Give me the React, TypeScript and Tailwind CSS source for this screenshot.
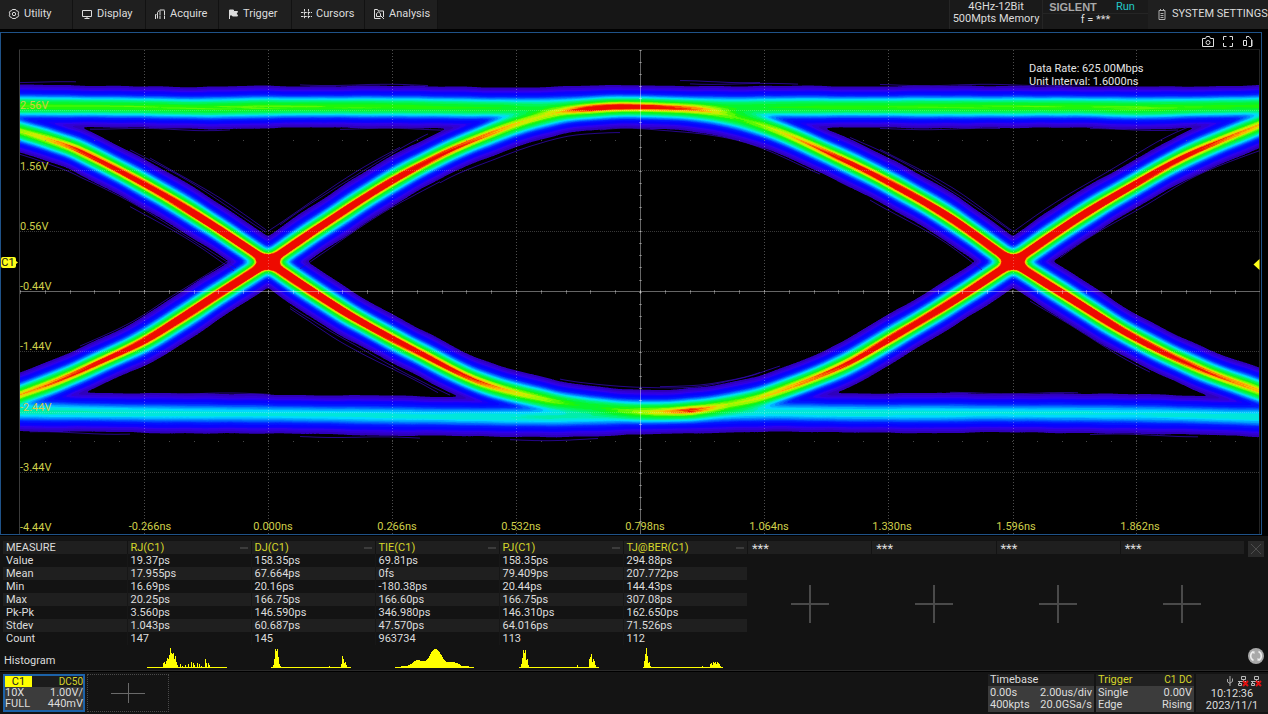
import type { ReactNode } from "react";

type Knot = [x: number, y: number, gain: number];

const LEFT = 20;
const RIGHT = 1260;
const TOP = 70;
const BOTTOM = 450;
const SIGMA = 9;

// Each trace is a list of knots: position on the grid and hit density there.
const traces: Knot[][] = [
  [
    [20, 106, 0.83], [140, 107, 0.83], [200, 108, 0.83], [268, 107, 0.84], [400, 107, 0.82], [500, 108, 0.8],
    [560, 107, 0.7], [640, 106, 0.68], [740, 107, 0.78], [800, 107, 0.81], [880, 107, 0.82], [1000, 107, 0.83],
    [1080, 107, 0.83], [1140, 108, 0.84], [1200, 107, 0.82], [1260, 106, 0.81],
  ],
  [
    [20, 411, 0.64], [144, 413, 0.61], [268, 414, 0.59], [420, 416, 0.6], [550, 417, 0.63], [640, 415, 0.6],
    [760, 412, 0.6], [860, 413, 0.61], [1000, 413, 0.59], [1140, 414, 0.59], [1260, 417, 0.61],
  ],
  [
    [20, 395, 0.92], [60, 380, 0.95], [100, 362, 0.97], [144, 341, 1], [180, 319, 1.02], [220, 293, 1.03],
    [268, 262, 1.04], [320, 227, 1.02], [387, 184, 1], [443, 154, 0.97], [487, 135, 0.94], [520, 123, 0.91],
    [560, 113, 0.87], [590, 109, 0.92], [620, 107, 0.93], [660, 108, 0.9], [700, 111, 0.86], [740, 119, 0.83],
    [780, 132, 0.9], [830, 154, 0.96], [880, 178, 0.99], [947, 216, 1.02], [1013, 262, 1.04], [1065, 295, 1.03],
    [1130, 335, 1], [1200, 369, 0.96], [1260, 391, 0.92],
  ],
  [
    [20, 131, 0.88], [50, 140, 0.92], [80, 151, 0.96], [144, 184, 0.99], [200, 217, 1.02], [268, 262, 1.04],
    [310, 290, 1.03], [353, 317, 1.01], [420, 353, 0.99], [480, 382, 0.95], [548, 400, 0.87], [590, 406, 0.77],
    [640, 411, 0.84], [690, 410, 0.93], [730, 404, 0.87], [765, 396, 0.91], [840, 367, 0.96], [890, 339, 1],
    [950, 303, 1.02], [1013, 262, 1.04], [1080, 217, 1.02], [1137, 183, 1], [1180, 159, 0.98], [1220, 141, 0.95],
    [1260, 125, 0.92],
  ],
];

const colorStops: [number, number, number, number][] = [
  [0.055, 46, 0, 180],
  [0.13, 52, 0, 235],
  [0.2, 8, 0, 255],
  [0.34, 0, 30, 255],
  [0.46, 0, 130, 255],
  [0.56, 0, 225, 255],
  [0.68, 0, 245, 110],
  [0.8, 10, 245, 10],
  [0.87, 150, 250, 0],
  [0.91, 245, 225, 0],
  [0.94, 255, 130, 0],
  [0.965, 238, 10, 0],
];

function colorAt(v: number) {
  let i = 0;
  while (i < colorStops.length - 2 && v > colorStops[i + 1][0]) i++;
  const a = colorStops[i];
  const b = colorStops[i + 1];
  const t = Math.min(1, Math.max(0, (v - a[0]) / (b[0] - a[0])));
  const c = [1, 2, 3].map((k) => Math.round(a[k] + (b[k] - a[k]) * t));
  return `rgb(${c.join(",")})`;
}

function sample(knots: Knot[], x: number) {
  let i = 0;
  while (i < knots.length - 2 && x > knots[i + 1][0]) i++;
  const p1 = knots[i];
  const p2 = knots[i + 1];
  const p0 = knots[i - 1] ?? p1;
  const p3 = knots[i + 2] ?? p2;
  const h = p2[0] - p1[0];
  const t = (x - p1[0]) / h;
  const m1 = ((p2[1] - p0[1]) / (p2[0] - p0[0])) * h;
  const m2 = ((p3[1] - p1[1]) / (p3[0] - p1[0])) * h;
  const t2 = t * t;
  const t3 = t2 * t;
  const y = (2 * t3 - 3 * t2 + 1) * p1[1] + (t3 - 2 * t2 + t) * m1 + (3 * t2 - 2 * t3) * p2[1] + (t3 - t2) * m2;
  const slope = ((6 * t2 - 6 * t) * p1[1] + (3 * t2 - 4 * t + 1) * m1 + (6 * t - 6 * t2) * p2[1] + (3 * t2 - 2 * t) * m2) / h;
  return { y, slope, gain: p1[2] + (p2[2] - p1[2]) * t };
}

const levels = [
  0.055, 0.09, 0.13, 0.17, 0.21, 0.28, 0.34, 0.38, 0.42, 0.46, 0.5, 0.54, 0.58, 0.62, 0.66, 0.7, 0.75, 0.8, 0.83, 0.86,
  0.885, 0.91, 0.925, 0.94, 0.952, 0.965,
];

// Density field of all traces, cut into one filled path per colour level.
function buildHeat() {
  const paths: string[][] = levels.map(() => []);
  const rows = BOTTOM - TOP;
  const field = new Float64Array(rows + 1);
  for (let x = LEFT; x < RIGHT; x++) {
    field.fill(0);
    traces.forEach((knots, k) => {
      const s = sample(knots, x + 0.5);
      const norm = Math.sqrt(1 + s.slope * s.slope);
      const from = Math.max(0, Math.floor(s.y - TOP - 32 * norm));
      const to = Math.min(rows, Math.ceil(s.y - TOP + 32 * norm));
      for (let r = from; r <= to; r++) {
        const d = (r + TOP - s.y) / norm;
        const grain =
          1 +
          0.014 * Math.sin(d * 2.3 + 3 * Math.sin(x / 61 + k)) +
          0.01 * Math.sin(d * 4.1 + x / 23 + k * 2) +
          0.0003 * d * d * Math.sin(x / 29 + k + Math.sin(x / 11));
        const v = s.gain * grain * Math.exp((-d * d) / (2 * SIGMA * SIGMA));
        field[r] += v * v * v * v;
      }
    });
    for (let r = 0; r <= rows; r++) field[r] = Math.sqrt(Math.sqrt(field[r]));
    levels.forEach((level, li) => {
      let start = -1;
      for (let r = 1; r <= rows; r++) {
        const a = field[r - 1];
        const b = field[r];
        if (a < level && b >= level) start = r - 1 + (level - a) / (b - a);
        if (a >= level && b < level && start >= 0) {
          const end = r - 1 + (a - level) / (a - b);
          paths[li].push(`M${x} ${(start + TOP).toFixed(1)}h1v${(end - start).toFixed(1)}h-1z`);
          start = -1;
        }
      }
    });
  }
  return paths.map((p, i) => ({ d: p.join(""), fill: colorAt(levels[i] + 0.01) }));
}

const heat = buildHeat();

function strayPath(k: number, offset: number, from: number, to: number) {
  const pts: string[] = [];
  for (let x = from; x <= to; x += 4) {
    const s = sample(traces[k], x);
    const y = s.y + offset * Math.sqrt(1 + s.slope * s.slope) + Math.sin(x / 19 + offset) * 0.7;
    pts.push(`${x} ${y.toFixed(1)}`);
  }
  return "M" + pts.join("L");
}

const strays = [
  strayPath(0, -22, 300, 430), strayPath(0, -23, 690, 800), strayPath(0, -25, 680, 760), strayPath(0, -22, 880, 1080),
  strayPath(0, -24, 20, 76), strayPath(0, 22, 90, 230), strayPath(0, 22, 340, 450), strayPath(0, 22, 880, 1000),
  strayPath(0, 22, 1090, 1180), strayPath(1, 22, 300, 420), strayPath(1, 23, 510, 600), strayPath(1, 21, 30, 130),
  strayPath(1, 21, 1090, 1200), strayPath(1, -20, 150, 270), strayPath(1, -20, 950, 1080), strayPath(2, -24, 280, 430),
  strayPath(2, -26, 268, 400), strayPath(2, 23, 300, 440), strayPath(2, 25, 440, 620), strayPath(2, 22, 600, 820),
  strayPath(2, -24, 850, 1012), strayPath(2, -26, 880, 1012), strayPath(2, 24, 870, 985), strayPath(2, -23, 80, 230),
  strayPath(2, 23, 1030, 1150), strayPath(3, -24, 130, 267), strayPath(3, -26, 150, 267), strayPath(3, 23, 20, 236),
  strayPath(3, 26, 130, 236), strayPath(3, 24, 290, 450), strayPath(3, 27, 290, 440), strayPath(3, -23, 560, 780),
  strayPath(3, -25, 1013, 1200), strayPath(3, 23, 1060, 1260), strayPath(3, -24, 660, 760),
].join("");

const verticals = [144, 268, 392, 516, 764, 888, 1013, 1136];
const horizontals = [110, 170, 231, 351, 412, 472];
const voltLabels: [string, number][] = [
  ["2.56V", 109], ["1.56V", 170], ["0.56V", 230], ["-0.44V", 290],
  ["-1.44V", 350], ["-2.44V", 411], ["-3.44V", 471], ["-4.44V", 531],
];
const timeLabels: [string, number][] = [
  ["-0.266ns", 150], ["0.000ns", 273], ["0.266ns", 397], ["0.532ns", 521], ["0.798ns", 645],
  ["1.064ns", 769], ["1.330ns", 892], ["1.596ns", 1016], ["1.862ns", 1140],
];

const majorX = Array.from({ length: 50 }, (_, i) => Math.round(20 + i * 24.8));
const majorY = Array.from({ length: 40 }, (_, i) => Math.round(50 + i * 12.08));

function EyeDiagram() {
  return (
    <svg viewBox="1 33 1260 501" className="block h-auto w-full" role="img" aria-label="Eye diagram">
      <g>
        {heat.map((h, i) => (
          <path key={i} d={h.d} fill={h.fill} />
        ))}
      </g>
      <path d={strays} fill="none" stroke="#3208b4" strokeWidth="1" opacity="0.75" />
      <path d="M19.5 50V534" stroke="#3a3a3a" />
      <path d="M19 49.5H1260" stroke="#1c1c1c" />
      <path d="M1259.5 50V534" stroke="#242424" />
      <g stroke="#fff" strokeOpacity="0.3" strokeDasharray="1 2">
        {verticals.map((x) => (
          <path key={x} d={`M${x + 0.5} 50V534`} />
        ))}
      </g>
      <g stroke="#fff" strokeOpacity="0.22" strokeDasharray="1 1">
        {horizontals.map((y) => (
          <path key={y} d={`M20 ${y + 0.5}H1260`} />
        ))}
      </g>
      <path d="M640.5 50V534M20 291.5H1260" stroke="#fff" strokeOpacity="0.4" />
      <g stroke="#fff" strokeOpacity="0.35">
        {majorX.map((x) => (
          <path key={x} d={`M${x + 0.5} 290V294`} />
        ))}
        {majorY.map((y) => (
          <path key={y} d={`M639 ${y + 0.5}H642`} />
        ))}
      </g>
      <g fill="#777" fillOpacity="0.6">
        {majorX.map((x) => (
          <path key={x} d={`M${x} 140h1v1h-1zM${x} 441h1v1h-1z`} />
        ))}
      </g>
      <g fill="#cfcf4a" fontSize="11">
        {voltLabels.map(([t, y]) => (
          <text key={t} x="20" y={y}>{t}</text>
        ))}
        {timeLabels.map(([t, x]) => (
          <text key={t} x={x} y="530" textAnchor="middle">{t}</text>
        ))}
      </g>
      <g fill="#e6e6e6" fontSize="11">
        <text x="1029" y="72">Data Rate: 625.00Mbps</text>
        <text x="1029" y="85">Unit Interval: 1.6000ns</text>
      </g>
      <path d="M3 257H14Q16 257 16 259V261L18 262.500L16 264V266Q16 268 14 268H3Q1 268 1 266V259Q1 257 3 257Z" fill="#ffff1a" />
      <text x="8" y="266" fontSize="11" fill="#111" textAnchor="middle">C1</text>
      <path d="M1259.500 259V270L1253.500 264.500Z" fill="#ffff1a" />
    </svg>
  );
}

function Glyph({ children, className = "" }: { children: ReactNode; className?: string }) {
  return (
    <svg viewBox="0 0 12 12" className={`size-3 shrink-0 ${className}`} fill="none" stroke="currentColor" aria-hidden="true">
      {children}
    </svg>
  );
}

const menu: { label: string; icon: ReactNode }[] = [
  {
    label: "Utility",
    icon: (
      <>
        <path d="M4.300 1.500h3.400l.6 1.200 1.500.3.9 1.800-.7 1.200.7 1.300-.9 1.800-1.500.3-.6 1.100H4.300l-.7-1.100-1.400-.3-.9-1.800.7-1.300-.7-1.200.9-1.800 1.400-.3z" />
        <circle cx="6" cy="6" r="1.700" />
      </>
    ),
  },
  { label: "Display", icon: <path d="M1.500 2.500h9v6h-9zM6 8.500v2M3.500 10.500h5" /> },
  { label: "Acquire", icon: <path d="M1.500 11V6.500h2V11M3.500 6.500V4.500L5.500 2h5M6 2.500V11M10.500 2.500V11" strokeDasharray="5 .5" /> },
  { label: "Trigger", icon: <path d="M2.500 11V2h4v1.500h4l-1 2 1 2.500h-5V7h-3" fill="currentColor" /> },
  { label: "Cursors", icon: <path d="M4.500 1v10M8.500 1v10M1 4.500h11M1 8.500h11" strokeDasharray="2.500 .8" /> },
  { label: "Analysis", icon: <path d="M1.500 10.500v-9h3l1 1.500h5v6M1.500 10.500h6M3.500 8.500v-3l2-1.500 2 1.500v3zM7.500 7.500l3.500 3.500" /> },
];

const labels = ["Value", "Mean", "Min", "Max", "Pk-Pk", "Stdev", "Count"];

const spikes = (pairs: [number, number][]) =>
  "M0 21h80v1H0z" + pairs.map(([x, h]) => `M${x} ${22 - h}h1v${h}h-1z`).join("");

const measures: { name: string; values: string[]; histogram: string }[] = [
  {
    name: "RJ(C1)",
    values: ["19.37ps", "17.955ps", "16.69ps", "20.25ps", "3.560ps", "1.043ps", "147"],
    histogram: spikes([
      [16, 5], [17, 6], [18, 4], [19, 7], [20, 10], [21, 9], [22, 13], [23, 20], [24, 15], [25, 14], [26, 15], [27, 9],
      [28, 12], [29, 6], [30, 3], [33, 4], [35, 2], [38, 3], [41, 4], [44, 6], [46, 5], [47, 3], [50, 5], [52, 4], [54, 2],
      [58, 9], [59, 5], [61, 5], [62, 3],
    ]),
  },
  {
    name: "DJ(C1)",
    values: ["158.35ps", "67.664ps", "20.16ps", "166.75ps", "146.590ps", "60.687ps", "145"],
    histogram: spikes([
      [2, 3], [3, 9], [4, 19], [5, 17], [6, 19], [7, 11], [8, 4], [9, 2], [58, 2], [70, 4], [71, 12], [72, 9], [73, 5],
      [74, 6], [75, 3],
    ]),
  },
  {
    name: "TIE(C1)",
    values: ["69.81ps", "0fs", "-180.38ps", "166.60ps", "346.980ps", "47.570ps", "963734"],
    histogram:
      "M0 22V21L12 20C18 18 19 14 23 14C28 15 30 17 33 13C37 5 38 3 41 3C44 3 46 9 49 14C52 18 54 15 59 16C64 17 65 20 69 20L79 21V22Z",
  },
  {
    name: "PJ(C1)",
    values: ["158.35ps", "79.409ps", "20.44ps", "166.75ps", "146.310ps", "64.016ps", "113"],
    histogram: spikes([
      [2, 4], [3, 10], [4, 18], [5, 15], [6, 18], [7, 8], [8, 9], [9, 3], [58, 3], [70, 9], [71, 11], [72, 14], [73, 6],
      [74, 9], [75, 7], [76, 3],
    ]),
  },
  {
    name: "TJ@BER(C1)",
    values: ["294.88ps", "207.772ps", "144.43ps", "307.08ps", "162.650ps", "71.526ps", "112"],
    histogram: spikes([
      [1, 7], [2, 14], [3, 20], [4, 12], [5, 5], [6, 6], [7, 2], [59, 2], [67, 4], [68, 5], [69, 3], [70, 6], [71, 5],
      [72, 6], [73, 4], [74, 6], [75, 5], [76, 4], [77, 2],
    ]),
  },
];

function Info({ rows }: { rows: [string, string][] }) {
  return (
    <div className="bg-[#3c3c3c] px-0.5 py-px">
      {rows.map(([a, b]) => (
        <div key={a} className="flex h-3 items-center justify-between leading-3">
          <span>{a}</span>
          <span>{b}</span>
        </div>
      ))}
    </div>
  );
}

function NetworkDown() {
  return (
    <svg viewBox="0 0 12 12" className="size-3" fill="none" stroke="#bbb" aria-hidden="true">
      <path d="M4.500 1.500h4v3h-4zM6.500 4.500v2M1 6.500h8M2.500 6.500v2M1.500 8.500h3v2h-3z" />
      <path d="M6 6l5 5M11 6l-5 5" stroke="#e01010" strokeWidth="2" />
    </svg>
  );
}

export default function App() {
  return (
    <div className="flex min-h-screen flex-col bg-black font-[Roboto,'Liberation_Sans',sans-serif] text-[11px] leading-3 text-[#dcdcdc]">
      <header className="flex h-[29px] bg-[#161616]">
        <nav className="flex" aria-label="Main">
          {menu.map((m) => (
            <button key={m.label} type="button" className="flex w-[73px] items-center gap-1 border-r border-[#121212] bg-[#1f1f1f] pb-0.5 pl-2">
              <Glyph>{m.icon}</Glyph>
              {m.label}
            </button>
          ))}
        </nav>
        <div className="ml-auto flex">
          <div className="flex w-[93px] flex-col items-center border-l border-[#252525] bg-[#1a1a1a] pt-px text-center">
            <span>4GHz-12Bit</span>
            <span>500Mpts Memory</span>
          </div>
          <div className="flex w-[106px] flex-col border-l border-[#252525] bg-[#1a1a1a]">
            <div className="flex h-[14px] items-center border-b border-[#252525]">
              <span className="w-[60px] text-center font-['Liberation_Sans',sans-serif] font-bold text-[#a8a8a8]">SIGLENT</span>
              <span className="flex-1 text-center text-[#22c8c8]">Run</span>
            </div>
            <span className="text-center">f = ***</span>
          </div>
          <button type="button" className="flex w-[120px] items-center gap-1 bg-[#1f1f1f] pb-0.5 pl-2">
            <Glyph className="text-[#b0b0b0]">
              <path d="M3 2.500h6v9H3zM4.500 1v2M7.500 1v2M4.500 5.500h3M4.500 7.500h3M4.500 9.500h3" />
            </Glyph>
            <span className="whitespace-nowrap">SYSTEM SETTINGS</span>
          </button>
        </div>
      </header>

      <main className="relative mt-[3px] mr-1.5 border border-[#1f5288]">
        <EyeDiagram />
        <div className="absolute top-0.5 right-1.5 flex gap-1.5">
          <button type="button" aria-label="Screenshot">
            <svg viewBox="0 0 14 14" className="size-3.5" fill="none" stroke="#e0e0e0">
              <path d="M1.500 3.500h3l1-2h3l1 2h3v8h-11z" />
              <circle cx="7" cy="7.500" r="2" />
            </svg>
          </button>
          <button type="button" aria-label="Full screen">
            <svg viewBox="0 0 14 14" className="size-3.5" fill="none" stroke="#e0e0e0">
              <path d="M2.500 5V1.500H5.500M8.500 1.500h3V5M11.500 8v3.500H8.500M5.500 11.500H2.500V8" />
            </svg>
          </button>
          <button type="button" aria-label="Rotate view">
            <svg viewBox="0 0 14 14" className="size-3.5" fill="none" stroke="#e0e0e0">
              <path d="M2.500 5.500h3v5h-3zM7.500 11.500h3V4.500l-2.500-3h-2.500v2M11 5v6" />
            </svg>
          </button>
        </div>
      </main>

      <section className="mt-px flex items-start border-b border-[#2a2a2a] bg-[#131313] pt-[5px] pl-[3px]">
        <table className="w-[744px] shrink-0 table-fixed border-collapse text-left">
          <thead>
            <tr className="h-[13px] bg-[#1f1f1f]">
              <th className="p-0 pl-[3px] font-normal">MEASURE</th>
              {measures.map((m) => (
                <th key={m.name} className="border-l border-[#131313] p-0 pl-[3px] font-normal text-[#d6d62a]">
                  <span className="flex items-center justify-between pr-[3px]">
                    {m.name}
                    <i className="h-0.5 w-2 bg-[#3c3c3c]" />
                  </span>
                </th>
              ))}
            </tr>
          </thead>
          <tbody>
            {labels.map((label, i) => (
              <tr key={label} className="h-[13px] odd:bg-[#131313] even:bg-[#1f1f1f]">
                <th className="p-0 pl-[3px] font-normal">{label}</th>
                {measures.map((m) => (
                  <td key={m.name} className="border-l border-[#171717] p-0 pl-[3px]">{m.values[i]}</td>
                ))}
              </tr>
            ))}
            <tr className="h-[25px]">
              <th className="p-0 pt-1.5 pl-px font-normal">Histogram</th>
              {measures.map((m) => (
                <td key={m.name} className="p-0 pt-px pl-5 align-top">
                  <svg viewBox="0 0 80 24" className="block h-6 w-20" shapeRendering="crispEdges" aria-hidden="true">
                    <path d={m.histogram} fill="#ffff00" />
                  </svg>
                </td>
              ))}
            </tr>
          </tbody>
        </table>
        <div className="grid flex-1 grid-cols-4 gap-px pl-px">
          {[0, 1, 2, 3].map((n) => (
            <button key={n} type="button" aria-label="Add measurement" className="flex flex-col items-center">
              <span className="h-[13px] w-full bg-[#1f1f1f] pl-1 text-left text-[13px] leading-[15px]">***</span>
              <svg viewBox="0 0 38 38" className="mt-[31px] size-[38px]" stroke="#4a4a4a" strokeWidth="2">
                <path d="M19 0v38M0 19h38" />
              </svg>
            </button>
          ))}
        </div>
        <div className="ml-1 flex w-5 flex-col justify-between self-stretch pb-1.5">
          <button type="button" aria-label="Close measurements" className="grid size-4 place-items-center bg-[#2a2a2a]">
            <svg viewBox="0 0 12 12" className="size-3" stroke="#4d4d4d">
              <path d="M1 1l10 10M11 1L1 11" />
            </svg>
          </button>
          <button type="button" aria-label="Reset statistics">
            <svg viewBox="0 0 16 16" className="size-4" fill="none">
              <circle cx="8" cy="8" r="8" fill="#a9a9a9" />
              <path d="M5.500 12.500a5 5 0 0 1 0-9M10.500 3.500a5 5 0 0 1 0 9" stroke="#ededed" strokeWidth="1.500" />
              <path d="M4 4.500l2.500-1.500v3zM12 11.500L9.500 13v-3z" fill="#ededed" />
            </svg>
          </button>
        </div>
      </section>

      <footer className="mt-px flex flex-1 items-start gap-0.5 bg-[#141414] pt-0.5 pl-[3px]">
        <button type="button" className="w-[82px] border-2 border-[#1c62a8] text-left">
          <span className="flex h-[11px] items-center justify-between bg-[#1c1c1c] leading-[11px]">
            <span className="w-[27px] bg-[#ffff00] text-center text-[#222]">C1</span>
            <span className="text-[10px] text-[#d6d62a]">DC50</span>
          </span>
          <span className="block bg-[#3c3c3c]">
            <span className="flex h-[11px] justify-between"><span>10X</span><span>1.00V/</span></span>
            <span className="flex h-[12px] justify-between"><span>FULL</span><span>440mV</span></span>
          </span>
        </button>
        <button type="button" aria-label="Add channel" className="grid h-[38px] w-[82px] place-items-center border border-dotted border-[#4a4a4a]">
          <svg viewBox="0 0 34 20" className="h-5 w-[34px]" stroke="#6a6a6a">
            <path d="M17.500 0v20M0 10.500h34" />
          </svg>
        </button>
        <div className="ml-auto flex gap-0.5">
          <div className="w-[106px]">
            <div className="h-3 bg-[#202020] px-0.5">Timebase</div>
            <Info rows={[["0.00s", "2.00us/div"], ["400kpts", "20.0GSa/s"]]} />
          </div>
          <div className="w-[98px]">
            <div className="flex h-3 justify-between bg-[#202020] px-0.5 text-[#d6d62a]">
              <span>Trigger</span>
              <span className="text-[10px]">C1 DC</span>
            </div>
            <Info rows={[["Single", "0.00V"], ["Edge", "Rising"]]} />
          </div>
          <div className="flex h-[38px] w-[72px] flex-col items-center bg-[#202020]">
            <div className="flex h-[14px] items-center gap-px self-end pr-1.5">
              <svg viewBox="0 0 12 12" className="size-3" fill="none" stroke="#aaa" aria-hidden="true">
                <path d="M6 1v10M3.500 4v3L6 8.500M8.500 3.500v3L6 8" />
              </svg>
              <NetworkDown />
              <NetworkDown />
            </div>
            <span>10:12:36</span>
            <span>2023/11/1</span>
          </div>
        </div>
      </footer>
    </div>
  );
}
